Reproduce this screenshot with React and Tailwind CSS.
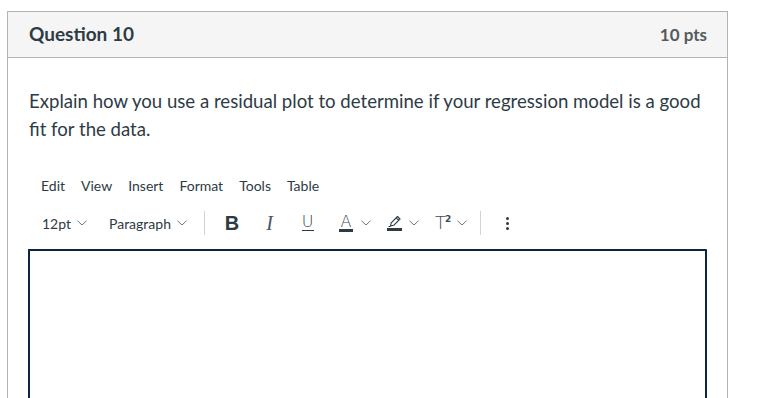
import React from "react";

const Chev = ({ ml }) => (
  <svg width="10" height="6" viewBox="0 0 10 6" className={ml} fill="none">
    <path d="M0.5 0.8 L5 5 L9.5 0.8" stroke="#6b7780" strokeWidth="1" />
  </svg>
);

export default function App() {
  return (
    <div className="w-[763px] h-[398px] overflow-hidden bg-white pl-[7px] pt-[11px]" style={{ fontFamily: "Lato, 'Noto Sans', sans-serif" }}>
      <div className="w-[721px] border border-[#b3b3b3] h-[500px] text-[#2d3b45]">
        <div className="h-[46px] bg-[#f5f5f5] border-b border-[#b3b3b3] flex items-center justify-between pl-[21px] pr-[20px]">
          <div className="text-[19px] font-bold">Question 10</div>
          <div className="text-[17px] font-bold text-[#555a5e]">10 pts</div>
        </div>
        <div className="pl-[21px] pr-[20px] pt-[29px]">
          <p className="text-[18.6px] leading-[28px]">
            Explain how you use a residual plot to determine if your regression model is a good fit for the data.
          </p>
          <div className="mt-[27px] h-[30px] flex items-center gap-[16px] pl-[12px] text-[14px]">
            <span>Edit</span>
            <span>View</span>
            <span>Insert</span>
            <span>Format</span>
            <span>Tools</span>
            <span>Table</span>
          </div>
          <div className="mt-[8px] h-[30px] flex items-center pl-[13px] text-[14px]">
            <span className="w-[29px]">12pt</span>
            <Chev ml="ml-[6px]" />
            <span className="ml-[22px] w-[61px]">Paragraph</span>
            <Chev ml="ml-[7px]" />
            <div className="ml-[17px] w-px h-[24px] bg-[#d0d4d8]" />
            <span className="ml-[20px] w-[14px] flex justify-center text-[20px] font-bold leading-none" style={{ fontFamily: "'Liberation Sans', Arial, sans-serif" }}>B</span>
            <span className="ml-[25px] w-[11px] flex justify-center text-[20px] italic leading-none text-[#4a5660]" style={{ fontFamily: "'Liberation Serif', serif" }}>I</span>
            <span className="ml-[26px] w-[13px] flex flex-col items-center">
              <span className="text-[16px] leading-[13px]" style={{ fontFamily: "'DejaVu Sans', sans-serif", fontWeight: 200 }}>U</span>
              <span className="mt-[2px] w-[12px] h-px bg-[#2d3b45]" />
            </span>
            <span className="ml-[25px] w-[14px] flex flex-col items-center">
              <span className="text-[16px] leading-[13px] text-[#3d4a54]" style={{ fontFamily: "'DejaVu Sans', sans-serif", fontWeight: 200 }}>A</span>
              <span className="mt-[1px] w-[14px] h-[3px] bg-[#2d3b45]" />
            </span>
            <Chev ml="ml-[8px]" />
            <span className="ml-[16px] w-[15px] flex flex-col items-center">
              <svg width="15" height="13" viewBox="0 0 15 13" fill="none">
                <path d="M3.5 11 L4.2 7.8 L10.5 1.5 L13 4 L6.7 10.3 Z M9.2 2.8 L11.7 5.3" stroke="#2d3b45" strokeWidth="1.1" strokeLinejoin="round" />
                <path d="M1.5 11.5 L3.5 11.5" stroke="#2d3b45" strokeWidth="1" />
              </svg>
              <span className="w-[15px] h-[3px] bg-[#2d3b45]" />
            </span>
            <Chev ml="ml-[7px]" />
            <span className="ml-[16px] w-[16px] flex items-start text-[#3d4a54]" style={{ fontFamily: "'DejaVu Sans', sans-serif" }}>
              <span className="text-[18px] leading-[16px]" style={{ fontWeight: 200 }}>T</span>
              <span className="text-[9px] leading-[9px] font-bold -ml-[1px]">2</span>
            </span>
            <Chev ml="ml-[6px]" />
            <div className="ml-[13px] w-px h-[24px] bg-[#d0d4d8]" />
            <span className="ml-[25px] flex flex-col gap-[2px]">
              <span className="w-[3px] h-[3px] rounded-full bg-[#2d3b45]" />
              <span className="w-[3px] h-[3px] rounded-full bg-[#2d3b45]" />
              <span className="w-[3px] h-[3px] rounded-full bg-[#2d3b45]" />
            </span>
          </div>
          <div className="mt-[11px] -ml-[1px] w-[679px] h-[200px] border-2 border-[#0b2640] rounded-tr-[1px]" />
        </div>
      </div>
    </div>
  );
}
